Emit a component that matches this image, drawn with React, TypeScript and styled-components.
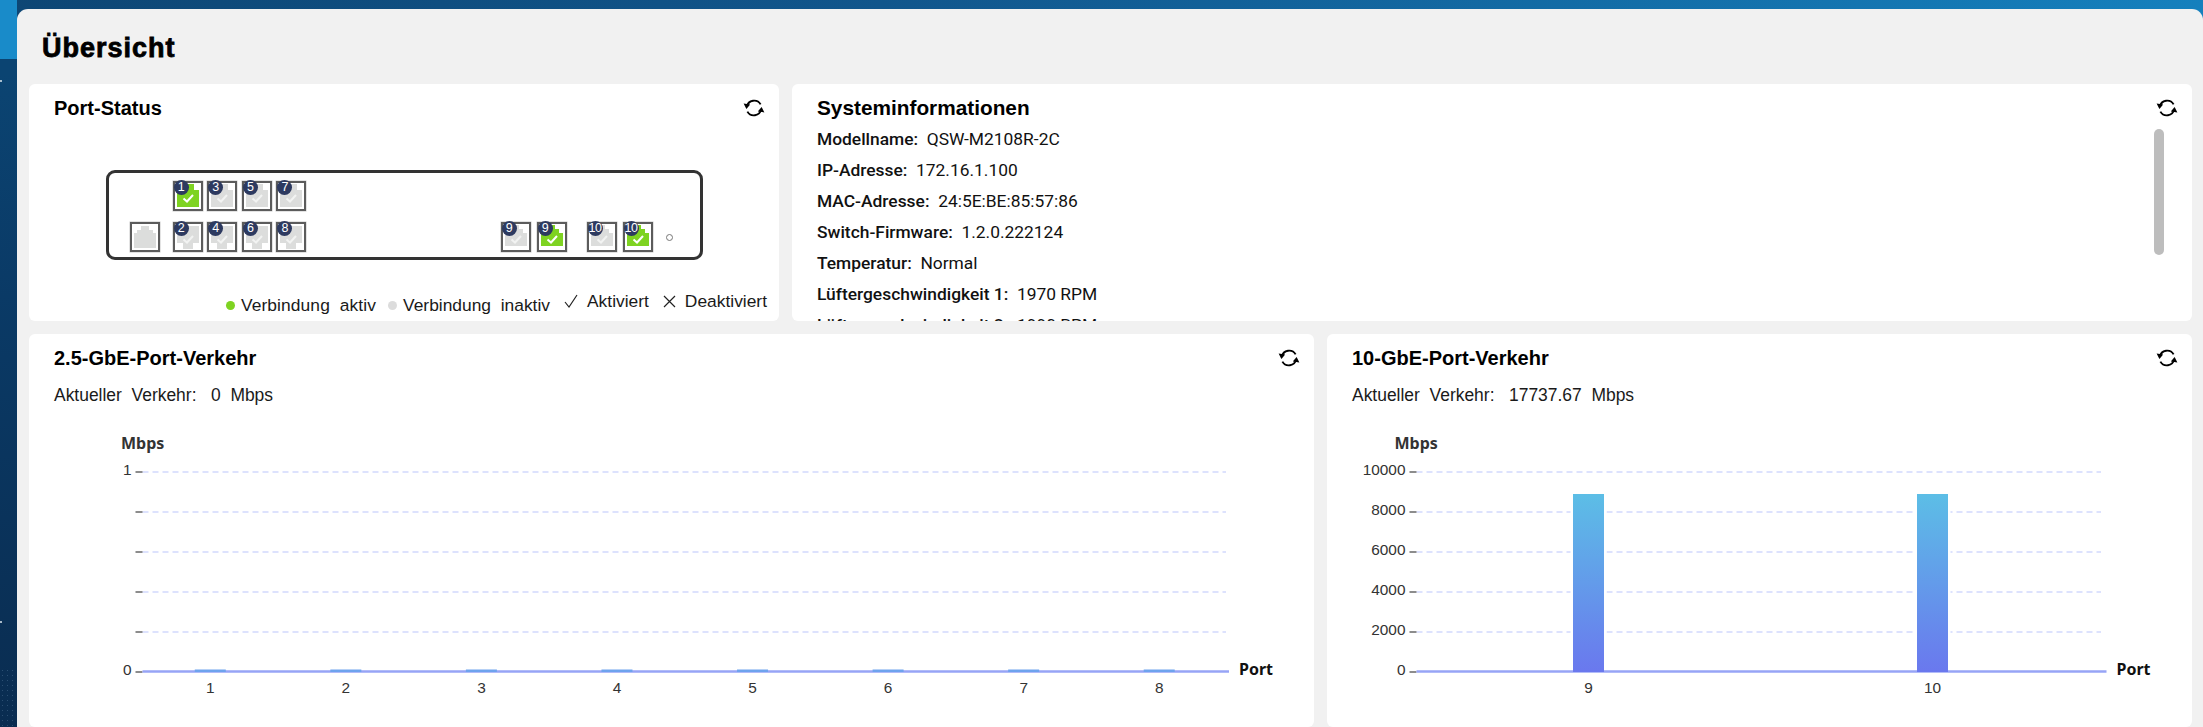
import React from "react";
import styled, { createGlobalStyle } from "styled-components";

const GlobalStyle = createGlobalStyle`
  html, body { margin: 0; padding: 0; height: 100%; overflow: hidden; }
  body { font-family: "Liberation Sans", Arial, sans-serif; color: #111; }
`;

const Shell = styled.div`
  display: grid;
  grid-template-columns: 17px 1fr;
  width: 2203px;
  height: 727px;
  overflow: hidden;
  background: linear-gradient(to right, #0d4674, #11568c 40%, #1580bd);
`;

const Side = styled.aside`
  position: relative;
  background: linear-gradient(#0b4472 10%, #0a3a66 40%, #0a2c50);
`;

const SideActive = styled.div`
  height: 59px;
  background: #198bc9;
`;

const SideDots = styled.div`
  position: absolute;
  left: 0;
  right: 0;
  bottom: 0;
  height: 72px;
  background-image: radial-gradient(circle, rgba(160, 200, 230, 0.22) 0.6px, transparent 1px);
  background-size: 5px 5px;
`;

const SideMark = styled.i<{ $top: number }>`
  position: absolute;
  left: 0;
  top: ${(p) => p.$top}px;
  width: 2px;
  height: 2px;
  border-radius: 50%;
  background: #dfe8ef;
`;

const Main = styled.main`
  margin-top: 9px;
  padding: 0 11px 0 12px;
  background: #f1f1f1;
  border-radius: 11px 11px 0 0;
`;

const PageTitle = styled.h1`
  margin: 0;
  height: 75px;
  padding-left: 13px;
  box-sizing: border-box;
  font-size: 27px;
  line-height: 78px;
  font-weight: 700;
  letter-spacing: 1px;
  -webkit-text-stroke: 0.8px #000;
  color: #000;
`;

const Grid = styled.div<{ $columns: string; $height: number }>`
  display: grid;
  grid-template-columns: ${(p) => p.$columns};
  column-gap: 13px;
  height: ${(p) => p.$height}px;
  margin-bottom: 13px;
`;

const Card = styled.section`
  position: relative;
  display: flex;
  flex-direction: column;
  min-width: 0;
  background: #fff;
  border-radius: 6px;
  overflow: hidden;
`;

const CardHeader = styled.header`
  display: flex;
  align-items: center;
  justify-content: space-between;
  height: 32px;
  flex: none;
  margin-top: 8px;
  padding: 0 14px 0 25px;
`;

const CardTitle = styled.h2<{ $size?: number }>`
  margin: 0;
  font-size: ${(p) => p.$size ?? 20}px;
  font-weight: 700;
  color: #000;
`;

const RefreshButton = styled.button`
  display: flex;
  padding: 0;
  border: 0;
  background: none;
  cursor: pointer;
`;

const SwitchBox = styled.div`
  display: flex;
  align-items: flex-end;
  box-sizing: border-box;
  width: 597px;
  height: 90.5px;
  margin: 45.5px 0 0 76.5px;
  padding: 7px 27px 5px 21px;
  border: 3px solid #333;
  border-radius: 9px;
`;

const PortGrid = styled.div`
  display: grid;
  grid-template-columns: repeat(4, 30px);
  column-gap: 4.6px;
  row-gap: 11px;
  margin-left: 13px;
`;

const SfpGroup = styled.div`
  display: flex;
  align-items: center;
  margin-left: auto;
`;

const SfpPair = styled.div`
  display: flex;
  gap: 6px;
  margin-right: 20px;
`;

const LedHole = styled.span`
  width: 7px;
  height: 7px;
  margin-left: -7px;
  box-sizing: border-box;
  border: 1px solid #777;
  border-radius: 50%;
`;

const PortBox = styled.div`
  position: relative;
  box-sizing: border-box;
  width: 30px;
  height: 30px;
  background: #fff;
  border: 2px solid #5c5c5c;
  box-shadow: 0 0 0 0.5px #c8c8c8;
`;

const PortBadge = styled.span`
  position: absolute;
  left: -1px;
  top: -3px;
  width: 15px;
  height: 15px;
  border-radius: 50%;
  background: #2d3a60;
  color: #fff;
  font-size: 12.5px;
  line-height: 15px;
  text-align: center;
  letter-spacing: -0.5px;
`;

const Legend = styled.div`
  display: flex;
  align-items: flex-end;
  justify-content: flex-end;
  margin-top: auto;
  padding: 0 12px 5px 0;
  font-size: 17.4px;
  line-height: 22px;
  color: #1a1a1a;
  white-space: pre;
`;

const LegendItem = styled.span<{ $raised?: boolean; $gap: number; $spacing?: number; $before: number }>`
  display: flex;
  align-items: center;
  gap: ${(p) => p.$gap}px;
  margin-left: ${(p) => p.$before}px;
  margin-bottom: ${(p) => (p.$raised ? 4 : 0)}px;
  letter-spacing: ${(p) => p.$spacing ?? 0}px;
`;

const LegendDot = styled.i<{ $color: string }>`
  width: 9px;
  height: 9px;
  border-radius: 50%;
  background: ${(p) => p.$color};
`;

const InfoBody = styled.div`
  flex: 1;
  min-height: 0;
  overflow: hidden;
  padding-left: 25px;
`;

const InfoRow = styled.div`
  height: 31px;
  font-family: Roboto, sans-serif;
  font-size: 17.4px;
  line-height: 31px;
  color: #111;
  white-space: pre;
`;

const InfoLabel = styled.span`
  font-weight: 500;
`;

const ScrollThumb = styled.div`
  position: absolute;
  top: 45px;
  right: 28px;
  width: 10px;
  height: 126px;
  border-radius: 5px;
  background: #bdbdbd;
`;

const TrafficLine = styled.p`
  margin: 8px 0 0;
  padding-left: 25px;
  font-size: 17.45px;
  line-height: 26px;
  color: #1a1a1a;
  white-space: pre;
`;

const ChartSvg = styled.svg`
  display: block;
  flex: none;
  margin-top: 22px;
  font-family: "Liberation Sans", Arial, sans-serif;
`;

const RefreshIcon = () => (
  <svg width="22" height="18" viewBox="0 0 22 18">
    <g fill="none" stroke="#000" strokeWidth="1.9">
      <path d="M3.9 7.6 A7.4 7.4 0 0 1 17.6 5.4" />
      <path d="M18.1 10.4 A7.4 7.4 0 0 1 4.4 12.6" />
    </g>
    <polygon points="0.6,4.6 7.2,5.4 3.4,10" fill="#000" />
    <polygon points="21.4,13.4 14.8,12.6 18.6,8" fill="#000" />
  </svg>
);

type PortKind = "upper" | "lower" | "console" | "sfp";

const portShapes: Record<PortKind, string> = {
  upper: "4,10 8,10 8,3 21,3 21,9 26,9 26,26 4,26",
  lower: "4,4 26,4 26,21 20,21 20,27 10,27 10,21 4,21",
  console: "4,26 4,11 7,11 7,8 11,8 11,4 19,4 19,8 23,8 23,11 26,11 26,26",
  sfp: "4,3 18,3 18,7 22,7 22,11 26,11 26,24 4,24",
};

const Port = ({ kind, num, active }: { kind: PortKind; num?: number; active?: boolean }) => (
  <PortBox>
    <svg width="26" height="26" viewBox="2 2 26 26">
      <polygon points={portShapes[kind]} fill={active ? "#7ed321" : "#dcdddc"} />
      {num !== undefined && (
        <polyline
          points="10.5,17.5 14,20.5 20,14"
          fill="none"
          stroke={active ? "#fff" : "#f2f3f2"}
          strokeWidth="2"
        />
      )}
    </svg>
    {num !== undefined && <PortBadge>{num}</PortBadge>}
  </PortBox>
);

const GRID_TOP = 42;
const GRID_STEP = 40;
const AXIS_Y = 241.5;

interface ChartProps {
  width: number;
  originX: number;
  endX: number;
  gridEndX: number;
  yLabels: string[];
  mbpsX: number;
  ports: number[];
  values: number[];
  gradientId: string;
}

const TrafficChart = ({ width, originX, endX, gridEndX, yLabels, mbpsX, ports, values, gradientId }: ChartProps) => {
  const slot = (endX - originX) / ports.length;
  const maxBar = 200;
  return (
    <ChartSvg width={width} height={300} viewBox={`0 0 ${width} 300`}>
      <defs>
        <linearGradient id={gradientId} x1="0" y1="0" x2="0" y2="1">
          <stop offset="0" stopColor="#5cbee6" />
          <stop offset="1" stopColor="#6a78ee" />
        </linearGradient>
      </defs>
      <text x={mbpsX} y={19} fontSize="16" fontWeight="700" fill="#333" fontFamily="Noto Sans, sans-serif">
        Mbps
      </text>
      {[0, 1, 2, 3, 4].map((i) => (
        <line
          key={i}
          x1={originX}
          x2={gridEndX}
          y1={GRID_TOP + GRID_STEP * i}
          y2={GRID_TOP + GRID_STEP * i}
          stroke="#dde2fd"
          strokeWidth="2"
          strokeDasharray="6 4"
        />
      ))}
      {[0, 1, 2, 3, 4, 5].map((i) => (
        <line
          key={i}
          x1={originX - 7}
          x2={originX}
          y1={GRID_TOP + GRID_STEP * i}
          y2={GRID_TOP + GRID_STEP * i}
          stroke="#666"
          strokeWidth="1.4"
        />
      ))}
      {yLabels.map((label, i) =>
        label ? (
          <text key={i} x={originX - 11} y={GRID_TOP + GRID_STEP * i + 3} fontSize="15.4" fill="#333" textAnchor="end">
            {label}
          </text>
        ) : null
      )}
      <line x1={originX} x2={endX + 2} y1={AXIS_Y} y2={AXIS_Y} stroke="#97a4f6" strokeWidth="2.6" />
      {ports.map((port, i) => {
        const cx = originX + slot * (i + 0.5);
        const h = values[i] * maxBar;
        return (
          <g key={port}>
            {h > 0 ? (
              <>
                <rect x={cx - 18} y={242 - h} width={36} height={h - 3} fill="#fff" />
                <rect x={cx - 15.5} y={242 - h} width={31} height={h} fill={`url(#${gradientId})`} />
              </>
            ) : (
              <rect x={cx - 15.5} y={239.5} width={31} height={2.5} fill="#6ea3ee" />
            )}
            <text x={cx} y={263} fontSize="15.4" fill="#333" textAnchor="middle">
              {port}
            </text>
          </g>
        );
      })}
      <text x={endX + 12} y={245} fontSize="16" fontWeight="700" fill="#111" fontFamily="Noto Sans, sans-serif">
        Port
      </text>
    </ChartSvg>
  );
};

const infoRows: [string, string][] = [
  ["Modellname", "QSW-M2108R-2C"],
  ["IP-Adresse", "172.16.1.100"],
  ["MAC-Adresse", "24:5E:BE:85:57:86"],
  ["Switch-Firmware", "1.2.0.222124"],
  ["Temperatur", "Normal"],
  ["Lüftergeschwindigkeit 1", "1970 RPM"],
  ["Lüftergeschwindigkeit 2", "1990 RPM"],
];

const App = () => (
  <>
    <GlobalStyle />
    <Shell>
      <Side>
        <SideActive />
        <SideMark $top={80} />
        <SideMark $top={621} />
        <SideDots />
      </Side>
      <Main>
        <PageTitle>Übersicht</PageTitle>
        <Grid $columns="750px 1fr" $height={237}>
          <Card>
            <CardHeader>
              <CardTitle>Port-Status</CardTitle>
              <RefreshButton>
                <RefreshIcon />
              </RefreshButton>
            </CardHeader>
            <SwitchBox>
              <Port kind="console" />
              <PortGrid>
                <Port kind="upper" num={1} active />
                <Port kind="upper" num={3} />
                <Port kind="upper" num={5} />
                <Port kind="upper" num={7} />
                <Port kind="lower" num={2} />
                <Port kind="lower" num={4} />
                <Port kind="lower" num={6} />
                <Port kind="lower" num={8} />
              </PortGrid>
              <SfpGroup>
                <SfpPair>
                  <Port kind="sfp" num={9} />
                  <Port kind="sfp" num={9} active />
                </SfpPair>
                <SfpPair>
                  <Port kind="sfp" num={10} />
                  <Port kind="sfp" num={10} active />
                </SfpPair>
                <LedHole />
              </SfpGroup>
            </SwitchBox>
            <Legend>
              <LegendItem $gap={6} $spacing={0.1} $before={0}>
                <LegendDot $color="#7ed321" />
                Verbindung  aktiv
              </LegendItem>
              <LegendItem $gap={6} $before={12}>
                <LegendDot $color="#dcdcdc" />
                Verbindung  inaktiv
              </LegendItem>
              <LegendItem $gap={9} $raised $before={14}>
                <svg width="14" height="14" viewBox="0 0 14 14" fill="none" stroke="#222" strokeWidth="1.2">
                  <path d="M1 8 L5 13 L13 1" />
                </svg>
                Aktiviert
              </LegendItem>
              <LegendItem $gap={9} $raised $before={14}>
                <svg width="13" height="13" viewBox="0 0 13 13" fill="none" stroke="#222" strokeWidth="1.2">
                  <path d="M1 1 L12 12 M12 1 L1 12" />
                </svg>
                Deaktiviert
              </LegendItem>
            </Legend>
          </Card>
          <Card>
            <CardHeader>
              <CardTitle $size={20.8}>Systeminformationen</CardTitle>
              <RefreshButton>
                <RefreshIcon />
              </RefreshButton>
            </CardHeader>
            <InfoBody>
              {infoRows.map(([label, value]) => (
                <InfoRow key={label}>
                  <InfoLabel>{label}:</InfoLabel>
                  {"  "}
                  {value}
                </InfoRow>
              ))}
            </InfoBody>
            <ScrollThumb />
          </Card>
        </Grid>
        <Grid $columns="1285px 1fr" $height={393}>
          <Card>
            <CardHeader>
              <CardTitle>2.5-GbE-Port-Verkehr</CardTitle>
              <RefreshButton>
                <RefreshIcon />
              </RefreshButton>
            </CardHeader>
            <TrafficLine>Aktueller  Verkehr:   0  Mbps</TrafficLine>
            <TrafficChart
              width={1285}
              originX={113.5}
              endX={1198}
              gridEndX={1197}
              yLabels={["1", "", "", "", "", "0"]}
              mbpsX={92}
              ports={[1, 2, 3, 4, 5, 6, 7, 8]}
              values={[0, 0, 0, 0, 0, 0, 0, 0]}
              gradientId="barsA"
            />
          </Card>
          <Card>
            <CardHeader>
              <CardTitle>10-GbE-Port-Verkehr</CardTitle>
              <RefreshButton>
                <RefreshIcon />
              </RefreshButton>
            </CardHeader>
            <TrafficLine>Aktueller  Verkehr:   17737.67  Mbps</TrafficLine>
            <TrafficChart
              width={865}
              originX={89.5}
              endX={777.5}
              gridEndX={774}
              yLabels={["10000", "8000", "6000", "4000", "2000", "0"]}
              mbpsX={67.5}
              ports={[9, 10]}
              values={[0.89, 0.89]}
              gradientId="barsB"
            />
          </Card>
        </Grid>
      </Main>
    </Shell>
  </>
);

export default App;
